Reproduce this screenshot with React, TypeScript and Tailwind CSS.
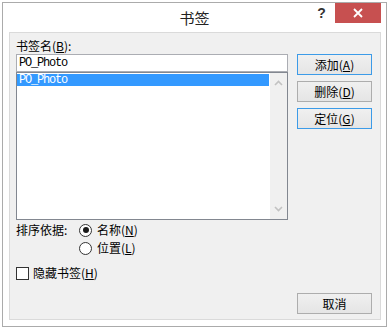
const cjk = "font-['SimSun','Noto_Sans_CJK_SC',sans-serif]";

function Key({ k }: { k: string }) {
  return (
    <>
      (<span className="underline underline-offset-[1px]">{k}</span>)
    </>
  );
}

function Btn({ label, k, focus }: { label: string; k: string; focus?: boolean }) {
  return (
    <div
      className={`flex h-[21px] w-[75px] items-center justify-center border bg-gradient-to-b from-[#f0f0f0] to-[#e5e5e5] text-[12px] leading-none text-black ${
        focus ? "border-[#3c9be8]" : "border-[#adadad]"
      }`}
    >
      {label}
      {k && <Key k={k} />}
    </div>
  );
}

function Chevron({ down }: { down?: boolean }) {
  return (
    <svg width="9" height="6" viewBox="0 0 9 6" className="block">
      <path
        d={down ? "M1 1 L4.5 4.5 L8 1" : "M1 5 L4.5 1.5 L8 5"}
        fill="none"
        stroke="#c2c2c2"
        strokeWidth="1.6"
      />
    </svg>
  );
}

function Radio({ checked, label, k }: { checked?: boolean; label: string; k: string }) {
  return (
    <div className="flex h-[18px] items-center gap-[5px]">
      <div className="flex h-[13px] w-[13px] items-center justify-center rounded-full border border-[#333333] bg-white">
        {checked && <div className="h-[6px] w-[6px] rounded-full bg-[#1a1a1a]" />}
      </div>
      <span>
        {label}
        <Key k={k} />
      </span>
    </div>
  );
}

export default function App() {
  return (
    <div className={`h-[332px] w-[390px] bg-white pl-[2px] pt-[2px] text-black ${cjk}`}>
      <div className="flex h-[325px] w-[385px] flex-col border border-[#ababab] bg-white">
        {/* title bar */}
        <div className="flex h-[29px] items-start">
          <div className="w-[78px]" />
          <div className="flex-1 pt-[2px] text-center text-[15px] leading-[26px] text-[#222222]">书签</div>
          <div className="flex items-start pr-[5px]">
            <div className="flex h-[20px] w-[27px] items-center justify-center pt-[1px] font-['Liberation_Sans',sans-serif] text-[14px] font-bold text-[#333333]">
              ?
            </div>
            <div className="flex h-[20px] w-[46px] items-center justify-center bg-[#c75050]">
              <svg width="10" height="10" viewBox="0 0 10 10">
                <path d="M1 1 L9 9 M9 1 L1 9" stroke="white" strokeWidth="1.8" />
              </svg>
            </div>
          </div>
        </div>

        {/* client area */}
        <div className="ml-[6px] mr-[5px] flex h-[288px] w-[372px] flex-col border border-[#dadada] bg-[#f0f0f0] pb-[5px] pl-[6px] pr-[8px] pt-[6px] text-[12px] leading-none">
          <div className="flex gap-[9px]">
            <div className="flex w-[272px] flex-col">
              <div className="h-[13px] leading-[13px]">
                书签名<Key k="B" />:
              </div>
              <div className="mt-[2px] flex h-[18px] items-center border border-[#abadb3] bg-white pl-[2px] font-['Liberation_Mono',monospace] text-[12px] tracking-[-1.2px]">
                PO_Photo
              </div>
              <div className="flex h-[148px] border border-[#828790] bg-white">
                <div className="flex-1 pr-[1px] pt-[1px]">
                  <div className="flex h-[12px] items-center bg-[#3399ff] pl-[2px] font-['Liberation_Mono',monospace] text-[12px] tracking-[-1.2px] text-white">
                    PO_Photo
                  </div>
                </div>
                <div className="flex w-[17px] flex-col items-center justify-between bg-[#f0f0f0] py-[7px]">
                  <Chevron />
                  <Chevron down />
                </div>
              </div>
            </div>
            <div className="flex w-[75px] flex-col gap-[6px] pt-[15px]">
              <Btn label="添加" k="A" focus />
              <Btn label="删除" k="D" />
              <Btn label="定位" k="G" focus />
            </div>
          </div>

          <div className="mt-[1px] flex">
            <div className="flex h-[18px] w-[63px] items-center">排序依据:</div>
            <div className="flex flex-col">
              <Radio checked label="名称" k="N" />
              <Radio label="位置" k="L" />
            </div>
          </div>

          <div className="mt-[7px] flex h-[18px] items-center gap-[4px]">
            <div className="h-[13px] w-[13px] border border-[#333333] bg-white" />
            <span>
              隐藏书签
              <Key k="H" />
            </span>
          </div>

          <div className="mt-auto flex justify-end">
            <Btn label="取消" k="" />
          </div>
        </div>
      </div>
    </div>
  );
}
